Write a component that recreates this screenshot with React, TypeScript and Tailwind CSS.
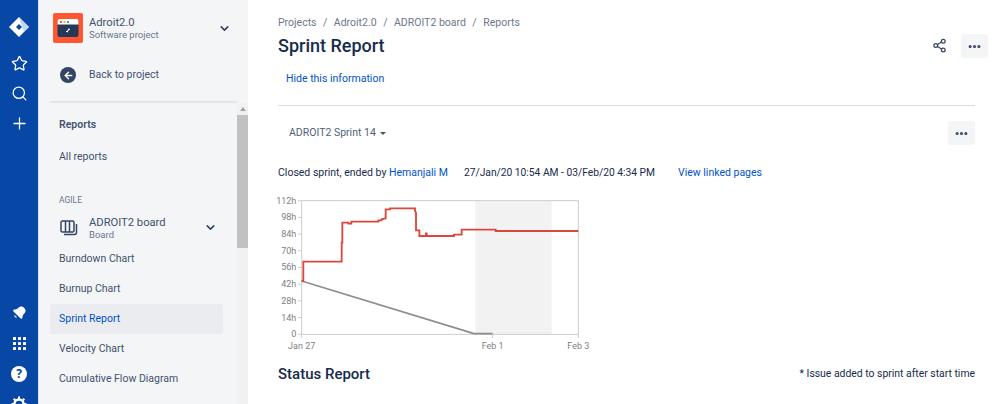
import React from 'react';
import { Star, Search, Plus, ChevronDown, Share2, MoreHorizontal, ArrowLeft, Bell } from 'lucide-react';

const FONT = "font-['Roboto','Noto_Sans',sans-serif]";

const JiraLogo = () => (
  <svg width="20" height="20" viewBox="0 0 20 20">
    <path d="M10 0 L20 10 L10 20 L0 10 Z" fill="#ffffff" />
    <path d="M10 0 L20 10 L15 15 L13 10 Z" fill="#a9c5f2" opacity="0.7" />
    <path d="M10 7 L13 10 L10 13 L7 10 Z" fill="#0747a6" />
  </svg>
);

const ProjectLogo = () => (
  <svg width="30" height="30" viewBox="0 0 30 30">
    <rect width="30" height="30" rx="2" fill="#ff5630" />
    <rect x="4.5" y="6" width="21" height="18" rx="2" fill="#253858" />
    <path d="M4.5 8a2 2 0 0 1 2-2h17a2 2 0 0 1 2 2v3.5h-21z" fill="#ffffff" />
    <rect x="7" y="8" width="2" height="2" fill="#ff5630" />
    <rect x="10.5" y="8" width="2" height="2" fill="#ffab00" />
    <rect x="14" y="8" width="2" height="2" fill="#00b8d9" />
    <path d="M16 15l-2 3h-1v1h1v1l2-3h1z" fill="#ffffff" />
  </svg>
);

const BoardIcon = () => (
  <svg width="18" height="16" viewBox="0 0 18 16" fill="none" stroke="#344563" strokeWidth="1.5">
    <rect x="1" y="1" width="13" height="11" rx="1.5" />
    <path d="M5.5 1v11M9.5 1v11" />
    <path d="M16.5 4v8.5a2 2 0 0 1-2 2H4" />
  </svg>
);

const GridIcon = () => (
  <svg width="13" height="13" viewBox="0 0 13 13" fill="#ffffff">
    {[0, 5, 10].flatMap((y) =>
      [0, 5, 10].map((x) => <rect key={`${x}-${y}`} x={x} y={y} width="3" height="3" rx="0.5" />)
    )}
  </svg>
);

const HelpIcon = () => (
  <div className="flex h-4 w-4 items-center justify-center rounded-full bg-white text-[12px] leading-none font-bold text-[#0747a6]">?</div>
);

const GearIcon = () => (
  <svg width="16" height="16" viewBox="0 0 16 16" fill="none" stroke="#ffffff">
    <circle cx="8" cy="8" r="4.5" strokeWidth="2.4" />
    <path d="M8 0.5v2.5M8 13v2.5M0.5 8h2.5M13 8h2.5M2.7 2.7l1.8 1.8M11.5 11.5l1.8 1.8M13.3 2.7l-1.8 1.8M4.5 11.5l-1.8 1.8" strokeWidth="2" />
  </svg>
);

const Rail = () => (
  <div className="flex h-[404px] w-[38px] shrink-0 flex-col items-center justify-between overflow-hidden bg-[#0747a6]">
    <div className="flex flex-col items-center pt-[17px]">
      <JiraLogo />
      <Star className="mt-[18px] text-white" size={17} strokeWidth={1.8} />
      <Search className="mt-[13px] text-white" size={17} strokeWidth={1.8} />
      <Plus className="mt-[12px] text-white" size={19} strokeWidth={1.6} />
    </div>
    <div className="mb-[-8px] flex flex-col items-center">
      <Bell size={15} fill="#ffffff" strokeWidth={1.5} className="rotate-45 text-white" />
      <div className="mt-[17px]"><GridIcon /></div>
      <div className="mt-[16px]"><HelpIcon /></div>
      <div className="mt-[14px]"><GearIcon /></div>
    </div>
  </div>
);

const NavItem = ({ label, active }: { label: string; active?: boolean }) => (
  <div className={`flex h-[30px] w-[173px] items-center rounded-[3px] px-[9px] text-[10.5px] ${active ? 'bg-[#ebecf0] text-[#0052cc]' : 'text-[#42526e]'}`}>
    {label}
  </div>
);

const Sidebar = () => (
  <div className={`flex h-[404px] w-[210px] shrink-0 flex-col border-l border-[#dfe1e6] bg-[#f4f5f7] pl-[11px] ${FONT}`}>
    <div className="mr-[11px] flex h-[103px] shrink-0 flex-col border-b-2 border-[#e4e6ec]">
      <div className="mt-[13px] flex items-center pl-[3px] pr-[6px]">
        <ProjectLogo />
        <div className="ml-[6px] flex-1">
          <div className="text-[11.2px] leading-[13px] text-[#42526e]">Adroit2.0</div>
          <div className="text-[9.5px] leading-[11px] text-[#6b778c]">Software project</div>
        </div>
        <ChevronDown size={13} strokeWidth={3} className="text-[#344563]" />
      </div>
      <div className="mt-[24px] flex items-center pl-[10px]">
        <div className="flex h-[16px] w-[16px] items-center justify-center rounded-full bg-[#344563]">
          <ArrowLeft size={11} strokeWidth={3} className="text-white" />
        </div>
        <span className="ml-[13px] text-[10.5px] text-[#42526e]">Back to project</span>
      </div>
    </div>
    <div className="flex flex-1 overflow-hidden">
      <div className="w-[187px] shrink-0">
        <div className="mt-[14px] pl-[9px] text-[10.5px] font-semibold text-[#42526e]">Reports</div>
        <div className="mt-[16px] pl-[9px] text-[10.5px] text-[#42526e]">All reports</div>
        <div className="mt-[29px] pl-[9px] text-[8.5px] leading-[12px] text-[#6b778c]">AGILE</div>
        <div className="mt-[10px] flex w-[173px] items-center pl-[10px] pr-[6px]">
          <BoardIcon />
          <div className="ml-[11px] flex-1">
            <div className="text-[11.2px] leading-[13px] text-[#42526e]">ADROIT2 board</div>
            <div className="text-[9.5px] leading-[11px] text-[#6b778c]">Board</div>
          </div>
          <ChevronDown size={13} strokeWidth={3} className="text-[#344563]" />
        </div>
        <div className="mt-[4px] flex flex-col">
          <NavItem label="Burndown Chart" />
          <NavItem label="Burnup Chart" />
          <NavItem active label="Sprint Report" />
          <NavItem label="Velocity Chart" />
          <NavItem label="Cumulative Flow Diagram" />
        </div>
      </div>
      <div className="flex w-[12px] shrink-0 flex-col bg-[#f1f1f1]">
        <div className="flex h-[12px] items-center justify-center">
          <div className="h-0 w-0 border-x-[3px] border-b-[4px] border-x-transparent border-b-[#a3a3a3]" />
        </div>
        <div className="h-[133px] bg-[#c1c1c1]" />
      </div>
    </div>
  </div>
);

const MoreButton = () => (
  <div className="flex h-[24px] w-[27px] items-center justify-center rounded-[3px] bg-[#f4f5f7]">
    <MoreHorizontal size={15} strokeWidth={3} className="text-[#344563]" />
  </div>
);

const RED =
  '95,285 100,285 100,227 215,227 215,170 217,170 217,110 235,110 235,113 244,113 244,107 325,107 325,103 335,103 335,100 347,97 347,70 360,70 360,67 435,67 435,75 438,80 438,133 448,133 448,150 468,150 468,142 470,142 470,150 552,150 552,146 575,146 575,131 677,131 677,135 925,135';

const yLabels = ['112h', '98h', '84h', '70h', '56h', '42h', '28h', '14h', '0'];

const Chart = () => (
  <svg width="330" height="168" viewBox="0 0 990 504" className="block">
    <rect x="616" y="44" width="229" height="401" fill="#f2f2f2" />
    <path d="M95 44H925V445H95Z" fill="none" stroke="#cccccc" strokeWidth="3" />
    {yLabels.map((label, i) => {
      const y = 44 + i * 50.1;
      return (
        <g key={label}>
          <line x1="84" x2="95" y1={y} y2={y} stroke="#cccccc" strokeWidth="3" />
          <text x="79" y={y + 9} textAnchor="end" fontSize="27" fill="#808080">{label}</text>
        </g>
      );
    })}
    <line x1="95" x2="95" y1="445" y2="456" stroke="#cccccc" strokeWidth="3" />
    <line x1="668" x2="668" y1="445" y2="456" stroke="#cccccc" strokeWidth="3" />
    <line x1="925" x2="925" y1="445" y2="456" stroke="#cccccc" strokeWidth="3" />
    <text x="95" y="488" textAnchor="middle" fontSize="27" fill="#808080">Jan 27</text>
    <text x="668" y="488" textAnchor="middle" fontSize="27" fill="#808080">Feb 1</text>
    <text x="925" y="488" textAnchor="middle" fontSize="27" fill="#808080">Feb 3</text>
    <polyline points="95,285 612,443 668,443" fill="none" stroke="#8c8c8c" strokeWidth="5" />
    <polyline points={RED} fill="none" stroke="#d9483b" strokeWidth="5.5" />
  </svg>
);

const Main = () => (
  <div className={`flex h-[404px] flex-1 flex-col overflow-hidden bg-white pl-[30px] pr-[10px] ${FONT}`}>
    <div className="mt-[15px] flex gap-[6.5px] text-[10.5px] leading-[15px] text-[#6b778c]">
      <span>Projects</span><span>/</span><span>Adroit2.0</span><span>/</span><span>ADROIT2 board</span><span>/</span><span>Reports</span>
    </div>
    <div className="mt-[4px] flex items-center justify-between">
      <h1 className="text-[18px] leading-[24px] font-medium text-[#172b4d]">Sprint Report</h1>
      <div className="flex items-center gap-[14px]">
        <Share2 size={15} strokeWidth={2} className="-mt-[2px] text-[#344563]" />
        <MoreButton />
      </div>
    </div>
    <div className="mt-[13px] pl-[8px] text-[10.5px] leading-[15px] text-[#0052cc]">Hide this information</div>
    <div className="mt-[19px] mr-[13px] border-t border-[#dcdcdc]" />
    <div className="mt-[15px] mr-[13px] flex items-center justify-between">
      <div className="flex items-center pl-[11px] text-[10.5px] text-[#505f79]">
        ADROIT2 Sprint 14
        <div className="ml-[4px] h-0 w-0 border-x-[3px] border-t-[3px] border-x-transparent border-t-[#42526e]" />
      </div>
      <MoreButton />
    </div>
    <div className="mt-[21px] flex text-[10.5px] leading-[14px] text-[#172b4d]">
      <span>Closed sprint, ended by <span className="text-[#0052cc]">Hemanjali M</span></span>
      <span className="ml-[16px] text-[10.25px]">27/Jan/20 10:54 AM - 03/Feb/20 4:34 PM</span>
      <span className="ml-[23px] text-[#0052cc]">View linked pages</span>
    </div>
    <div className="ml-[-8px] mt-[6px]">
      <Chart />
    </div>
    <div className="mr-[13px] mt-[9px] flex items-center justify-between">
      <h2 className="text-[15px] font-medium text-[#172b4d]">Status Report</h2>
      <span className="text-[10.4px] text-[#172b4d]">* Issue added to sprint after start time</span>
    </div>
  </div>
);

export default function App() {
  return (
    <div className="flex h-[404px] w-[998px] overflow-hidden">
      <Rail />
      <Sidebar />
      <Main />
    </div>
  );
}
